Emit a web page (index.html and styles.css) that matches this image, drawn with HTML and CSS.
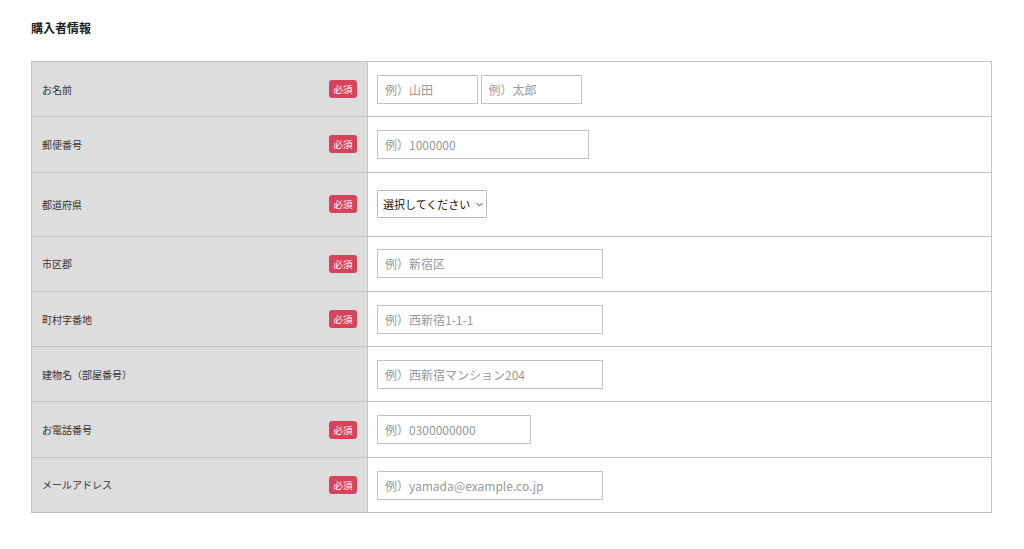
FILE: index.html
```html
<!DOCTYPE html>
<html lang="ja">
<head>
    <meta charset="UTF-8">
    <meta name="viewport" content="width=device-width, initial-scale=1.0">
    <title>購入者情報</title>
    <link rel="stylesheet" href="styles.css">
</head>
<body>
    <div class="wrap">
        <h2 class="ttl">購入者情報</h2>

        <table class="form-table">
            <tr>
                <th><div class="th-in"><span>お名前</span><span class="req">必須</span></div></th>
                <td>
                    <input type="text" class="w-half" placeholder="例）山田">
                    <input type="text" class="w-half" placeholder="例）太郎">
                </td>
            </tr>
            <tr>
                <th><div class="th-in"><span>郵便番号</span><span class="req">必須</span></div></th>
                <td><input type="text" class="w-zip" placeholder="例）1000000"></td>
            </tr>
            <tr class="row-select">
                <th><div class="th-in"><span>都道府県</span><span class="req">必須</span></div></th>
                <td>
                    <div class="select">
                        <span>選択してください</span>
                        <svg width="7" height="5" viewBox="0 0 7 5"><path d="M0.5 1 L3.5 4 L6.5 1" fill="none" stroke="#444" stroke-width="1"/></svg>
                    </div>
                </td>
            </tr>
            <tr>
                <th><div class="th-in"><span>市区郡</span><span class="req">必須</span></div></th>
                <td><input type="text" class="w-long" placeholder="例）新宿区"></td>
            </tr>
            <tr>
                <th><div class="th-in"><span>町村字番地</span><span class="req">必須</span></div></th>
                <td><input type="text" class="w-long" placeholder="例）西新宿1-1-1"></td>
            </tr>
            <tr>
                <th><div class="th-in"><span>建物名（部屋番号）</span></div></th>
                <td><input type="text" class="w-long" placeholder="例）西新宿マンション204"></td>
            </tr>
            <tr>
                <th><div class="th-in"><span>お電話番号</span><span class="req">必須</span></div></th>
                <td><input type="text" class="w-tel" placeholder="例）0300000000"></td>
            </tr>
            <tr>
                <th><div class="th-in"><span>メールアドレス</span><span class="req">必須</span></div></th>
                <td><input type="text" class="w-long" placeholder="例）yamada@example.co.jp"></td>
            </tr>
        </table>
    </div>
</body>
</html>
```

FILE: styles.css
```css
* {
    margin: 0;
    padding: 0;
    box-sizing: border-box;
}

body {
    font-family: "Noto Sans CJK JP", "Noto Sans", sans-serif;
    color: #333;
    background: #fff;
}

.wrap {
    padding: 19px 32px 0 31px;
}

.ttl {
    font-size: 12px;
    font-weight: bold;
    line-height: 18px;
    color: #222;
    margin-bottom: 24px;
}

.form-table {
    width: 961px;
    border-collapse: collapse;
    border: 1px solid #c4c4c4;
}

.form-table th,
.form-table td {
    height: 55.3px;
    border: 1px solid #c4c4c4;
    vertical-align: middle;
}

.form-table .row-select th,
.form-table .row-select td {
    height: 64px;
}

.form-table th {
    width: 336px;
    padding: 0 10px;
    background: #dddddd;
    font-weight: normal;
    text-align: left;
}

.th-in {
    display: flex;
    justify-content: space-between;
    align-items: center;
    font-size: 10px;
    color: #333;
}

.req {
    width: 28px;
    height: 18px;
    line-height: 18px;
    border-radius: 3px;
    background: #d7435a;
    color: #fff;
    font-size: 9.5px;
    text-align: center;
}

.form-table td {
    padding: 0 9px;
}

input[type=text] {
    height: 29px;
    padding: 0 7px;
    border: 1px solid #c4c4c4;
    font-family: inherit;
    font-size: 12px;
    color: #333;
    outline: none;
    vertical-align: middle;
}

input::placeholder {
    color: #999;
}

.w-half {
    width: 101px;
}

.w-half + .w-half {
    margin-left: -1px;
}

.w-zip {
    width: 212px;
}

.w-long {
    width: 226px;
}

.w-tel {
    width: 154px;
}

.select {
    display: inline-flex;
    align-items: center;
    gap: 6px;
    height: 28px;
    padding: 0 3px 0 5px;
    border: 1px solid #b8b8b8;
    font-size: 11px;
    color: #111;
    white-space: nowrap;
}

.select svg {
    flex-shrink: 0;
    margin-top: 1px;
}
```
